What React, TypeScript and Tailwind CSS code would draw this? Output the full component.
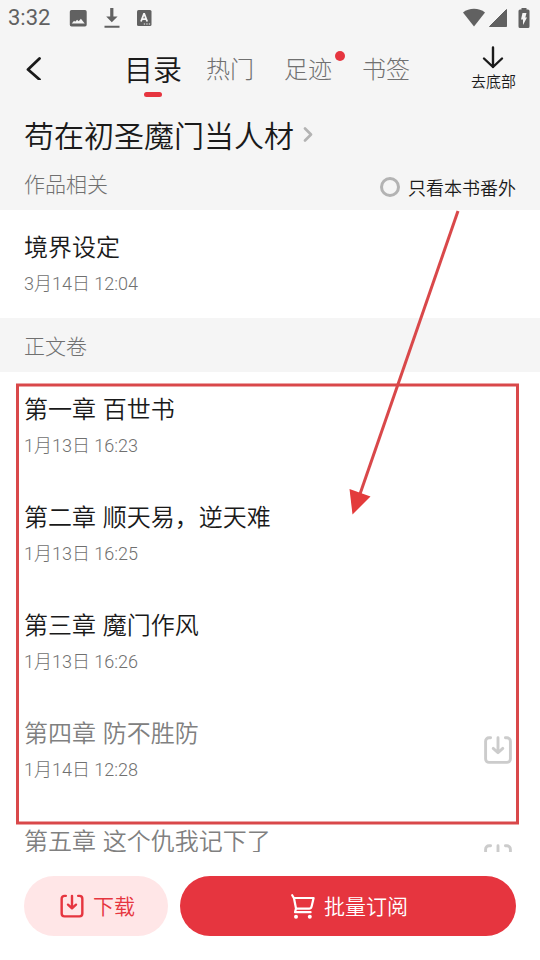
import { useState } from "react";

const tabs = [
  { id: "hot", label: "热门", dot: false },
  { id: "history", label: "足迹", dot: true },
  { id: "bookmark", label: "书签", dot: false },
];

const chapters = [
  { title: "第一章 百世书", date: "1月13日 16:23", locked: false },
  { title: "第二章 顺天易，逆天难", date: "1月13日 16:25", locked: false },
  { title: "第三章 魔门作风", date: "1月13日 16:26", locked: false },
  { title: "第四章 防不胜防", date: "1月14日 12:28", locked: true },
  { title: "第五章 这个仇我记下了", locked: true },
];

function DownloadIcon({ className }: { className?: string }) {
  return (
    <svg className={className} viewBox="0 0 36 36" fill="none" stroke="currentColor" strokeWidth={2.9} strokeLinecap="round" strokeLinejoin="round">
      <path d="M10.6 5.8H9a3.4 3.4 0 0 0-3.4 3.4v17.8a3.4 3.4 0 0 0 3.4 3.4h18a3.4 3.4 0 0 0 3.4-3.4V9.2a3.4 3.4 0 0 0-3.4-3.4h-1.6" />
      <path d="M18 5.8v14.5M13.2 16.4l4.8 4.4 4.8-4.4" />
    </svg>
  );
}

function CartIcon({ className }: { className?: string }) {
  return (
    <svg className={className} viewBox="0 0 30 30" fill="none" stroke="currentColor" strokeWidth={2.2} strokeLinecap="round" strokeLinejoin="round">
      <path d="M4.2 4.2L6 7.2l2 10.3-1 3.7h15.6" />
      <path d="M6 7h19.6l-2 8.5c-.3 1.4-1 2.2-2.4 2.2H8" />
      <circle cx="8" cy="25.8" r="2" fill="currentColor" stroke="none" />
      <circle cx="21.8" cy="25.8" r="2" fill="currentColor" stroke="none" />
    </svg>
  );
}

function StatusBar() {
  return (
    <div className="flex h-9 items-center justify-between px-2 text-[#616161]">
      <div className="flex items-center">
        <span className="w-[60px] font-[Roboto] text-[22px] font-normal leading-[38px]">3:32</span>
        <svg className="h-5 w-5" viewBox="0 0 20 20" fill="currentColor">
          <path fillRule="evenodd" d="M3.5 2h13.500a1.700 1.700 0 0 1 1.700 1.700v13a1.700 1.700 0 0 1-1.700 1.700H3.500a1.700 1.700 0 0 1-1.700-1.700V3.700A1.700 1.700 0 0 1 3.500 2zm.2 13.500h13l-3.800-4.700-2.200 2.500-1.600-1.500-2 2-1-1z" />
        </svg>
        <svg className="ml-4 h-5 w-4" viewBox="0 0 16 20" fill="currentColor">
          <path d="M6.200 0h3.200v8.500h4.200L7.800 14.200 2.200 8.500h4zM.5 17.700h15v2H.5z" />
        </svg>
        <svg className="ml-4 h-4 w-4" viewBox="0 0 16 16">
          <rect x="1" y="0" width="14.500" height="16" rx="1.500" fill="currentColor" />
          <path d="M5 11.500L7.900 4h.4l2.900 7.500M6 9.200h4.300" stroke="#f5f5f5" strokeWidth="1.800" fill="none" />
          <path d="M7.800 14h1.300M10.300 14h1.300M12.800 14h1.300" stroke="#f5f5f5" strokeWidth="1.200" />
        </svg>
      </div>
      <div className="flex items-center">
        <svg className="h-5 w-6" viewBox="0 0 24 20" fill="currentColor">
          <path d="M1 4.500C7-.5 17-.5 23 4.500L12 18.500z" />
        </svg>
        <svg className="ml-[2px] h-5 w-5" viewBox="0 0 20 20" fill="currentColor">
          <path d="M18.500 1.500v17h-17z" stroke="currentColor" strokeWidth="1" strokeLinejoin="round" />
        </svg>
        <svg className="ml-2 h-5 w-4" viewBox="0 0 16 20">
          <path d="M5.500 0h5v1.500H12a1.500 1.500 0 0 1 1.500 1.500v15.500a1.500 1.500 0 0 1-1.500 1.500H4a1.500 1.500 0 0 1-1.500-1.500V3A1.500 1.500 0 0 1 4 1.500h1.500z" fill="currentColor" />
          <path d="M6.500 5h4l-1.200 4.500h1.700L7 17v-5.500H5z" fill="#f5f5f5" />
        </svg>
      </div>
    </div>
  );
}

function SectionTitle({ children }: { children: React.ReactNode }) {
  return <h2 className="text-[21px] font-light leading-[54px] text-[#707070]">{children}</h2>;
}

function ChapterRow({ title, date, locked }: { title: string; date?: string; locked: boolean }) {
  return (
    <li className="flex h-[108px] items-center justify-between px-6">
      <div className="self-start pt-6 font-['Inter','Noto_Sans_CJK_SC',sans-serif]">
        <p className={locked ? "text-2xl leading-7 text-[#808080]" : "text-2xl leading-7"}>{title}</p>
        {date && (
          <p className="mt-2 font-['Roboto','Noto_Sans_CJK_SC',sans-serif] text-lg font-light leading-7 text-[#707070]">
            {date}
          </p>
        )}
      </div>
      {locked && (
        <button aria-label="下载本章">
          <DownloadIcon className="h-9 w-9 text-[#cccccc]" />
        </button>
      )}
    </li>
  );
}

export default function App() {
  const [onlyExtra, setOnlyExtra] = useState(false);

  return (
    <div className="relative flex h-screen flex-col overflow-hidden bg-white font-['Noto_Sans_CJK_SC',sans-serif] font-[350] text-[#1a1a1a]">
      <header className="shrink-0 bg-[#f5f5f5]">
        <StatusBar />

        <div className="flex h-16 items-center justify-between px-6">
          <button aria-label="返回" className="w-[100px]">
            <svg className="h-6 w-5" viewBox="0 0 20 24" fill="none" stroke="currentColor" strokeWidth={2.8} strokeLinecap="round" strokeLinejoin="round">
              <path d="M15.500 2.500L4 13.500l11.500 10" />
            </svg>
          </button>
          <nav className="flex flex-1 items-center">
            <button className="relative mr-6 text-[29px] leading-[64px]">
              目录
              <span className="absolute bottom-[3px] left-1/2 h-[5px] w-[18px] -translate-x-1/2 rounded-full bg-[#e6353f]" />
            </button>
            {tabs.map((tab) => (
              <button key={tab.id} className="relative mr-[30px] text-2xl font-light leading-[64px] text-[#707070]">
                {tab.label}
                {tab.dot && <span className="absolute -right-[13px] top-[15px] h-[10px] w-[10px] rounded-full bg-[#e6353f]" />}
              </button>
            ))}
          </nav>
          <button className="flex flex-col items-center pt-[2px] text-[15px] leading-6">
            <svg className="h-6 w-6" viewBox="0 0 24 24" fill="none" stroke="currentColor" strokeWidth={2.4} strokeLinecap="round" strokeLinejoin="round">
              <path d="M12 2.500v19.500M3 13.500l9 8.500 9-8.500" />
            </svg>
            去底部
          </button>
        </div>

        <a href="#book" className="flex h-[68px] items-center gap-1.5 px-6 text-3xl">
          <span className="leading-[66px]">苟在初圣魔门当人材</span>
          <svg className="h-4 w-4" viewBox="0 0 16 16" fill="none" stroke="#b3b3b3" strokeWidth={2.6} strokeLinecap="round" strokeLinejoin="round">
            <path d="M5 2.500l6 6-6 6" />
          </svg>
        </a>

        <div className="flex h-[42px] items-start justify-between px-6">
          <div className="-mt-3">
            <SectionTitle>作品相关</SectionTitle>
          </div>
          <label className="flex items-center gap-2 text-lg leading-[38px]">
            <input
              type="checkbox"
              checked={onlyExtra}
              onChange={(e) => setOnlyExtra(e.target.checked)}
              className="h-5 w-5 appearance-none rounded-full border-[3px] border-[#b3b3b3] checked:bg-[#e6353f]"
            />
            只看本书番外
          </label>
        </div>
      </header>

      <main className="min-h-0 flex-1 overflow-y-auto [scrollbar-width:none]">
        <ul>
          <ChapterRow title="境界设定" date="3月14日 12:04" locked={false} />
        </ul>
        <div className="bg-[#f5f5f5] px-6">
          <SectionTitle>正文卷</SectionTitle>
        </div>
        <ul>
          {chapters.map((chapter) => (
            <ChapterRow key={chapter.title} {...chapter} />
          ))}
        </ul>
      </main>

      <footer className="flex shrink-0 gap-3 p-6 text-[21px]">
        <button className="flex h-[60px] w-36 items-center justify-center gap-1.5 rounded-full bg-[#ffe6e7] text-[#e6353f]">
          <DownloadIcon className="h-[30px] w-[30px]" />
          下载
        </button>
        <button className="flex h-[60px] flex-1 items-center justify-center gap-1.5 rounded-full bg-[#e6353f] text-white">
          <CartIcon className="h-[30px] w-[30px]" />
          批量订阅
        </button>
      </footer>

      {/* guide marks over the chapter list */}
      <svg className="pointer-events-none absolute left-0 top-0 h-[960px] w-[540px]" viewBox="0 0 540 960" fill="none">
        <rect x="17.500" y="385" width="500" height="438" stroke="#d9484a" strokeWidth="3" />
        <path d="M458 211L360 494" stroke="#d9484a" strokeWidth="3" />
        <path d="M349.500 489l21 7.500-18 18z" fill="#e33b3b" />
      </svg>
    </div>
  );
}
